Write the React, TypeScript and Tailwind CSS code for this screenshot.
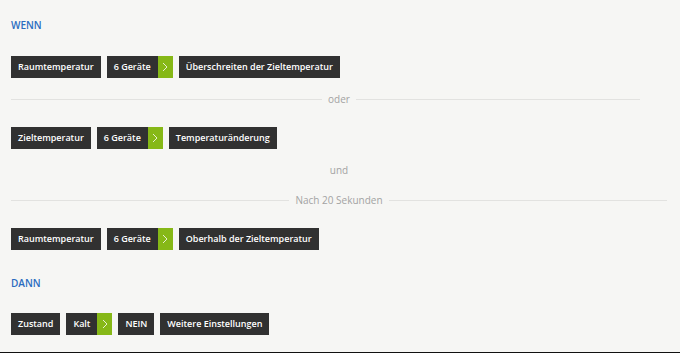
import React from "react";

function Chip({ label, arrow }: { label: string; arrow?: boolean }) {
  return (
    <div className="flex h-[22px] bg-[#313131]">
      <div className="flex items-center px-[7px] text-[9px] font-semibold text-white">{label}</div>
      {arrow && (
        <div className="flex w-[15px] items-center justify-center bg-[#86b817]">
          <svg width="6" height="10" viewBox="0 0 6 10" fill="none">
            <path d="M1 1l4 4-4 4" stroke="#e8f0d0" strokeWidth="1" />
          </svg>
        </div>
      )}
    </div>
  );
}

function Row({ children, className = "" }: { children: React.ReactNode; className?: string }) {
  return <div className={`flex gap-[6px] ${className}`}>{children}</div>;
}

export default function App() {
  return (
    <div
      className="flex h-[353px] w-[680px] flex-col bg-[#f6f6f4]"
      style={{ fontFamily: '"Open Sans", "Liberation Sans", sans-serif' }}
    >
      <div className="flex flex-1 flex-col px-[11px]">
        <div className="mt-[18px] text-[10px] leading-[14px] font-semibold text-[#2a6cc0]">WENN</div>
        <Row className="mt-[24px]">
          <Chip label="Raumtemperatur" />
          <Chip label="6 Geräte" arrow />
          <Chip label="Überschreiten der Zieltemperatur" />
        </Row>
        <div className="mt-[14px] flex h-[14px] items-center gap-[6px]">
          <div className="h-px w-[311px] bg-[#e2e2e0]" />
          <span className="text-[10px] leading-[14px] text-[#a3a3a3]">oder</span>
          <div className="h-px w-[284px] bg-[#e2e2e0]" />
        </div>
        <Row className="mt-[21px]">
          <Chip label="Zieltemperatur" />
          <Chip label="6 Geräte" arrow />
          <Chip label="Temperaturänderung" />
        </Row>
        <div className="mt-[14px] h-[14px] w-[656px] text-center text-[10px] leading-[14px] text-[#a3a3a3]">und</div>
        <div className="mt-[16px] flex h-[14px] w-[656px] items-center gap-[6px]">
          <div className="h-px flex-1 bg-[#e2e2e0]" />
          <span className="text-[10px] leading-[14px] text-[#a3a3a3]">Nach 20 Sekunden</span>
          <div className="h-px flex-1 bg-[#e2e2e0]" />
        </div>
        <Row className="mt-[21px]">
          <Chip label="Raumtemperatur" />
          <Chip label="6 Geräte" arrow />
          <Chip label="Oberhalb der Zieltemperatur" />
        </Row>
        <div className="mt-[26px] text-[10px] leading-[14px] font-semibold text-[#2a6cc0]">DANN</div>
        <Row className="mt-[23px]">
          <Chip label="Zustand" />
          <Chip label="Kalt" arrow />
          <Chip label="NEIN" />
          <Chip label="Weitere Einstellungen" />
        </Row>
      </div>
      <div className="h-px w-full bg-[#111]" />
    </div>
  );
}
